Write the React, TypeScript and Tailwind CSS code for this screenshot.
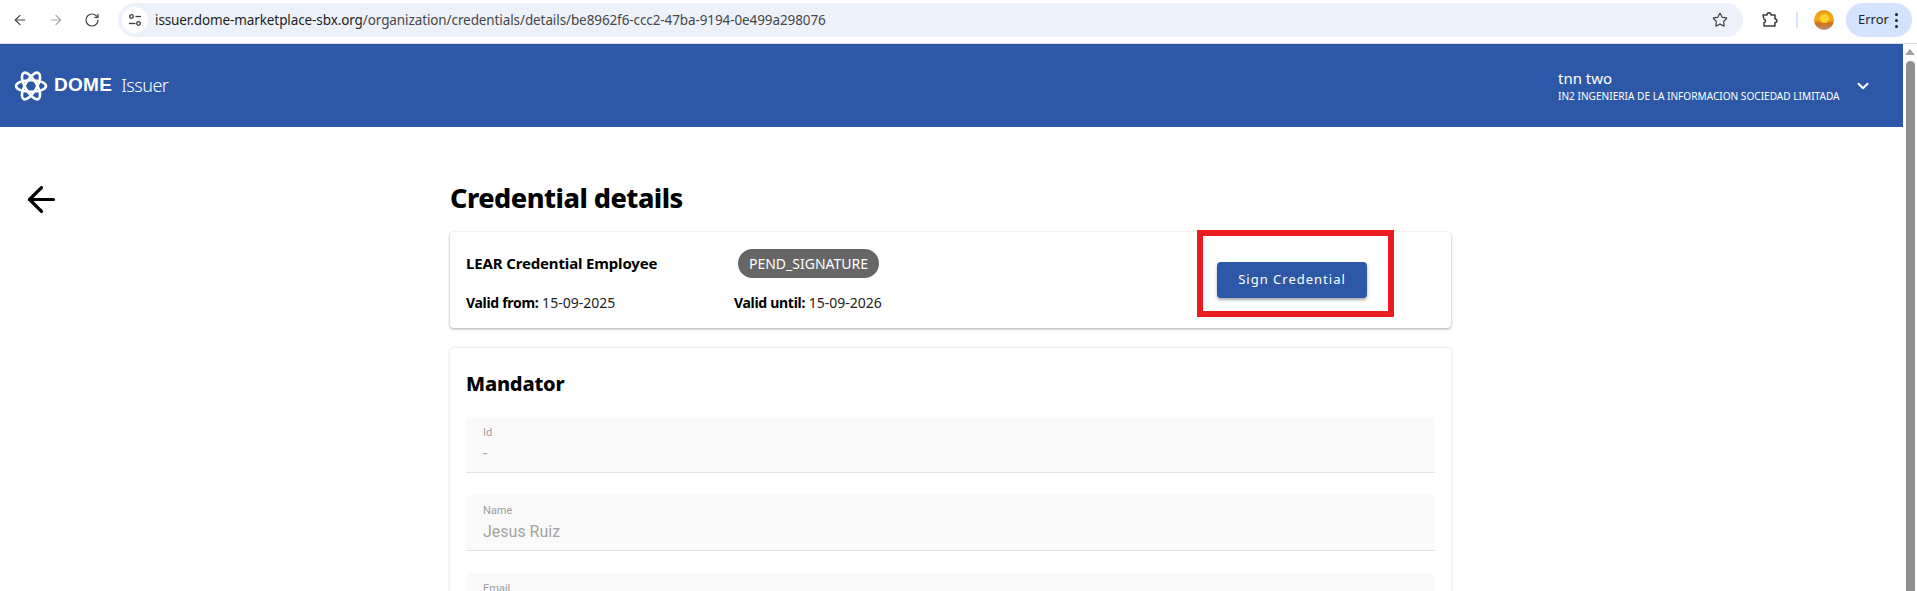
import React from 'react';
import { ArrowLeft, ArrowRight, ChevronDown, RotateCw, Star } from 'lucide-react';

const Field = ({ label, value, empty }: { label: string; value?: string; empty?: boolean }) => {
  return <div className="h-[56px] mb-[22px] px-[17px] pt-[9px] bg-[#fafafa] border-b border-[#e3e3e3] rounded-t font-['Roboto',sans-serif]">
      <div className="text-[11px] leading-[14px] text-[#9c9c9c]">{label}</div>
      {!empty && <div className="mt-[3px] text-[16px] leading-[22px] text-[#a3a3a3]">{value}</div>}
    </div>;
};

const DomeLogo = () => {
  return <svg width="34" height="30" viewBox="0 0 34 30" fill="none" stroke="white" strokeWidth="2.600">
      <ellipse cx="17" cy="15" rx="15" ry="5.800" />
      <ellipse cx="17" cy="15" rx="15" ry="5.800" transform="rotate(60 17 15)" />
      <ellipse cx="17" cy="15" rx="15" ry="5.800" transform="rotate(120 17 15)" />
    </svg>;
};

export default function App() {
  return <div className="h-[591px] w-[1917px] overflow-hidden bg-white font-['Noto_Sans',sans-serif]">
      <div className="h-[44px] flex items-center pb-[3px] border-b border-[#dadce0] bg-white">
        <ArrowLeft className="ml-[12px] w-[16px] h-[16px] text-[#474747] shrink-0" strokeWidth={1.8} />
        <ArrowRight className="ml-[20px] w-[16px] h-[16px] text-[#a8a8a8] shrink-0" strokeWidth={1.8} />
        <RotateCw className="ml-[20px] w-[16px] h-[16px] text-[#474747] shrink-0" strokeWidth={1.8} />
        <div className="ml-[18px] w-[1625px] h-[34px] shrink-0 rounded-full bg-[#edf2fa] flex items-center pl-[4px] pr-[15px]">
          <div className="w-[26px] h-[26px] rounded-full bg-white flex items-center justify-center">
            <svg width="14" height="14" viewBox="0 0 14 14" fill="none" stroke="#3c3c3c" strokeWidth="1.3">
              <circle cx="3.5" cy="3.5" r="1.8" />
              <path d="M7.5 3.5h5.5" />
              <circle cx="10.5" cy="10.5" r="1.8" />
              <path d="M1 10.5h6.5" />
            </svg>
          </div>
          <div className="ml-[7px] text-[13.500px] text-[#1f1f1f] tracking-[-0.1px] whitespace-nowrap">
            issuer.dome-marketplace-sbx.org<span className="text-[#474747]">/organization/credentials/details/be8962f6-ccc2-47ba-9194-0e499a298076</span>
          </div>
          <Star className="ml-auto w-[16px] h-[16px] text-[#474747]" strokeWidth={1.8} />
        </div>
        <svg className="ml-[18px] shrink-0" width="18" height="18" viewBox="0 0 18 18" fill="none" stroke="#3c3c3c" strokeWidth="1.5" strokeLinejoin="round">
          <path d="M2 4h4c0-3 4-3 4 0h4v4c2.500 0 2.500 3.500 0 3.500V15H3v-3.500c2-.2 2-3 0-3.200z" />
        </svg>
        <div className="ml-[17px] w-[2px] h-[16px] bg-[#d3e3fd] shrink-0" />
        <div className="ml-[16px] w-[20px] h-[20px] shrink-0 rounded-full bg-[linear-gradient(#e89a18_0%,#f0ac1c_50%,#d5701a_66%,#b58f78_100%)] flex justify-center pt-[4px]">
          <div className="w-[9px] h-[9px] rounded-full bg-[#fbd52a]" />
        </div>
        <div className="ml-[12px] w-[66px] h-[34px] shrink-0 rounded-full bg-[#d3e3fd] flex items-center pl-[12px]">
          <span className="w-[36px] text-[13px] text-[#1f1f1f]">Error</span>
          <div className="ml-[1px] flex flex-col gap-[3px]">
            <div className="w-[3px] h-[3px] rounded-full bg-[#1f1f1f]" />
            <div className="w-[3px] h-[3px] rounded-full bg-[#1f1f1f]" />
            <div className="w-[3px] h-[3px] rounded-full bg-[#1f1f1f]" />
          </div>
        </div>
      </div>

      <div className="flex h-[547px]">
        <div className="w-[1903px] overflow-hidden">
          <header className="h-[83px] bg-[#2d58a7] flex items-center text-white">
            <div className="ml-[14px] flex">
              <DomeLogo />
            </div>
            <span className="ml-[6px] text-[19px] font-bold font-['Liberation_Sans',sans-serif] tracking-[0.3px]">DOME</span>
            <span className="ml-[9px] text-[18px] font-light tracking-[-0.5px]">Issuer</span>
            <div className="ml-auto w-[281px]">
              <div className="text-[15px] leading-[18px]">tnn two</div>
              <div className="mt-[3px] text-[10.100px] leading-[13px] whitespace-nowrap">IN2 INGENIERIA DE LA INFORMACION SOCIEDAD LIMITADA</div>
            </div>
            <ChevronDown className="mr-[31px] ml-[15px] w-[18px] h-[18px]" strokeWidth={2.6} />
          </header>

          <div className="flex">
            <div className="w-[450px] pl-[21px] pt-[52px]">
              <ArrowLeft className="w-[41px] h-[41px] text-black" strokeWidth={1.900} />
            </div>
            <main className="w-[1001px]">
              <h1 className="mt-[53px] text-[27px] leading-[36px] font-extrabold text-black tracking-[-0.5px]">Credential details</h1>
              <section className="mt-[16px] h-[96px] rounded bg-white shadow-[0_1px_3px_rgba(0,0,0,0.35)] flex items-start">
                <div className="pl-[16px] w-[284px]">
                  <div className="mt-[21px] text-[15px] leading-[20px] font-bold text-black tracking-[-0.15px]">LEAR Credential Employee</div>
                  <div className="mt-[20px] text-[14px] leading-[20px] text-[#222]">
                    <b className="text-black tracking-[-0.3px]">Valid from:</b> 15-09-2025
                  </div>
                </div>
                <div className="w-[280px]">
                  <div className="ml-[4px] mt-[17px] w-[141px] h-[29px] rounded-full bg-[#666666] text-white text-[14px] flex items-center justify-center">PEND_SIGNATURE</div>
                  <div className="mt-[15px] text-[14px] leading-[20px] text-[#222]">
                    <b className="text-black tracking-[-0.3px]">Valid until:</b> 15-09-2026
                  </div>
                </div>
                <div className="ml-[183px] mt-[-2px] w-[197px] h-[87px] border-[6px] border-[#ea1c1f] flex items-start pl-[14px] pt-[26px]">
                  <button className="w-[150px] h-[36px] rounded bg-[#2d58a7] text-white text-[13px] tracking-[1px] shadow-[0_2px_3px_rgba(0,0,0,0.35)]">Sign Credential</button>
                </div>
              </section>
              <section className="mt-[20px] h-[300px] rounded bg-white shadow-[0_0_3px_rgba(0,0,0,0.18)] px-[16px]">
                <h2 className="pt-[19px] text-[20px] leading-[34px] font-extrabold text-black tracking-[-0.2px]">Mandator</h2>
                <div className="mt-[16px]">
                  <Field label="Id" value="-" />
                  <Field label="Name" value="Jesus Ruiz" />
                  <Field label="Email" empty />
                </div>
              </section>
            </main>
          </div>
        </div>
        <div className="w-[14px] h-full bg-[#fdfdfd] flex flex-col items-center">
          <div className="mt-[5px] w-0 h-0 border-x-[5px] border-x-transparent border-b-[6px] border-b-[#a3a3a3]" />
          <div className="mt-[6px] w-[9px] flex-1 rounded-t-full bg-[#8f8f8f]" />
        </div>
      </div>
    </div>;
}
